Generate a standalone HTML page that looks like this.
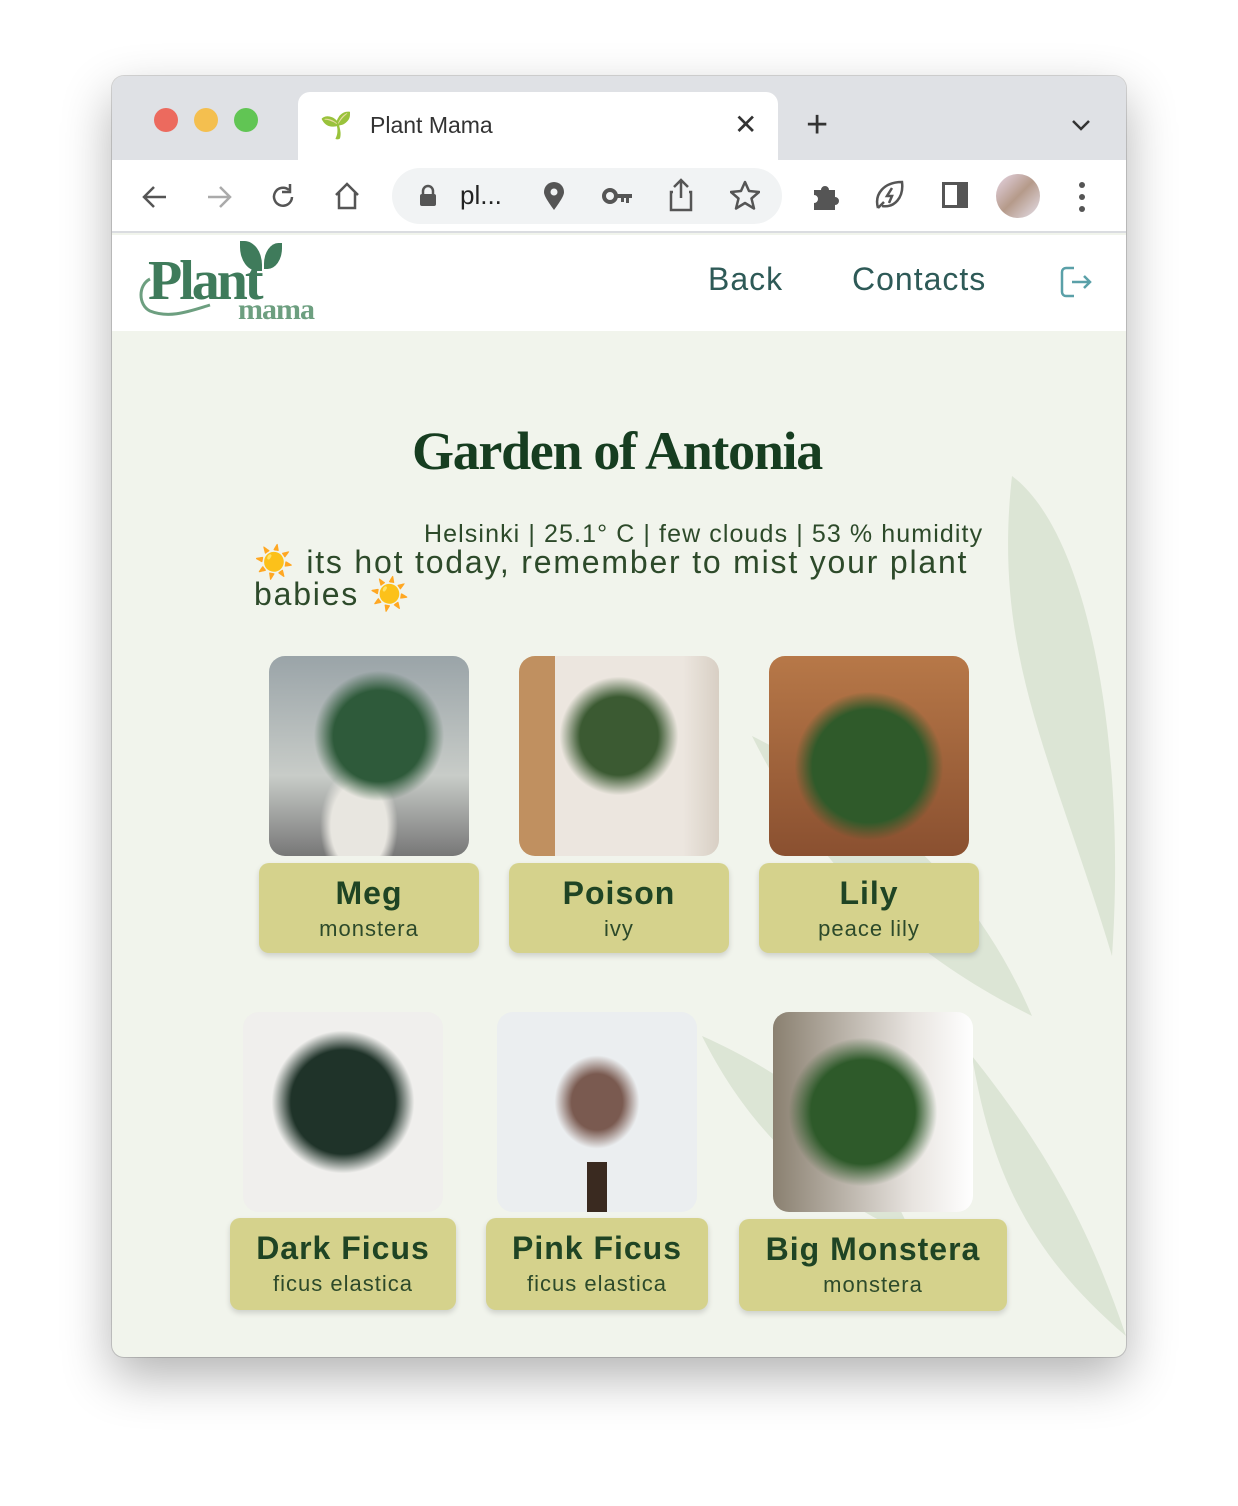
<!DOCTYPE html>
<html><head><style>
*{margin:0;padding:0;box-sizing:border-box}
body{width:1238px;height:1506px;background:#fff;font-family:"Liberation Sans",sans-serif;position:relative;overflow:hidden}
.win{position:absolute;left:112px;top:76px;width:1014px;height:1281px;border-radius:12px;overflow:hidden;box-shadow:0 20px 50px rgba(0,0,0,.3),0 0 0 1px rgba(0,0,0,.15);background:#f1f4ec}
.tabbar{position:absolute;left:0;top:0;width:100%;height:84px;background:#dfe1e5}
.dot{position:absolute;top:32px;width:24px;height:24px;border-radius:50%}
.tab{position:absolute;left:186px;top:16px;width:480px;height:70px;background:#fff;border-radius:12px 12px 0 0}
.toolbar{position:absolute;left:0;top:84px;width:100%;height:73px;background:#fff;border-bottom:2px solid #dadce0}
.url{position:absolute;left:280px;top:8px;width:390px;height:56px;background:#f1f3f4;border-radius:28px}
.hdr{position:absolute;left:0;top:159px;width:100%;height:96px;background:#fff}
.nav{position:absolute;top:26px;font-size:32px;color:#2e5a57;letter-spacing:1px}
.abs{position:absolute}
.img{position:absolute;width:200px;height:200px;border-radius:16px;overflow:hidden}
.lab{position:absolute;background:#d5d28c;border-radius:10px;box-shadow:0 3px 6px rgba(0,0,0,.15);text-align:center;color:#1f4424}
.lab b{display:block;font-size:32px;margin-top:12px;letter-spacing:1px}
.lab span{display:block;font-size:22px;margin-top:4px;color:#2d4a2a;letter-spacing:1px}
</style></head><body>
<div class="win">
 <div class="tabbar">
  <div class="dot" style="left:42px;background:#ec6a5e"></div>
  <div class="dot" style="left:82px;background:#f4bf4f"></div>
  <div class="dot" style="left:122px;background:#61c554"></div>
  <div class="tab">
   <div class="abs" style="left:22px;top:18px;font-size:26px">🌱</div>
   <div class="abs" style="left:72px;top:20px;font-size:23px;color:#333">Plant Mama</div>
   <div class="abs" style="left:436px;top:16px;font-size:28px;color:#333">✕</div>
  </div>
  <div class="abs" style="left:694px;top:30px;font-size:38px;color:#333;line-height:1">+</div>
  <svg class="abs" style="left:958px;top:42px" width="22" height="14"><path d="M3 3l8 8 8-8" stroke="#333" stroke-width="2.5" fill="none"/></svg>
 </div>
 <div class="toolbar">
  <svg class="abs" style="left:28px;top:22px" width="30" height="30"><path d="M26 15H5M14 5L4 15l10 10" stroke="#555" stroke-width="2.5" fill="none"/></svg>
  <svg class="abs" style="left:92px;top:22px" width="30" height="30"><path d="M4 15h21M16 5l10 10-10 10" stroke="#aaa" stroke-width="2.5" fill="none"/></svg>
  <svg class="abs" style="left:156px;top:22px" width="30" height="30"><path d="M24 15a9 9 0 1 1-3-7" stroke="#555" stroke-width="2.5" fill="none"/><path d="M22 2v8h-8" fill="none" stroke="#555" stroke-width="2.5"/></svg>
  <svg class="abs" style="left:220px;top:20px" width="30" height="32"><path d="M4 15L15 4l11 11M7 12v16h16V12" stroke="#555" stroke-width="2.5" fill="none"/></svg>
  <div class="url">
   <svg class="abs" style="left:26px;top:16px" width="20" height="24"><path d="M5 10V7a5 5 0 0 1 10 0v3" stroke="#555" stroke-width="2.5" fill="none"/><rect x="2" y="10" width="16" height="12" rx="2" fill="#555"/></svg>
   <div class="abs" style="left:68px;top:12px;font-size:26px;color:#222">pl...</div>
   <svg class="abs" style="left:150px;top:14px" width="24" height="30"><path d="M12 28C4 17 2 13 2 10a10 10 0 0 1 20 0c0 3-2 7-10 18z" fill="#555"/><circle cx="12" cy="10" r="3.5" fill="#f1f3f4"/></svg>
   <svg class="abs" style="left:210px;top:18px" width="32" height="20"><circle cx="8" cy="10" r="6" stroke="#555" stroke-width="4" fill="none"/><path d="M14 8h16v4h-3v5h-3v-5h-2v4h-3v-4h-5z" fill="#555"/></svg>
   <svg class="abs" style="left:276px;top:10px" width="26" height="34"><path d="M13 2v18M6 9l7-7 7 7M5 14H3v18h20V14h-2" stroke="#555" stroke-width="2.5" fill="none"/></svg>
   <svg class="abs" style="left:338px;top:12px" width="30" height="30"><path d="M15 2l4 9 10 1-7.5 6.5 2.5 10L15 23l-9 5.5 2.5-10L1 12l10-1z" stroke="#555" stroke-width="2.5" fill="none" stroke-linejoin="round"/></svg>
  </div>
  <svg class="abs" style="left:698px;top:20px" width="32" height="32"><path d="M4 10h7a4 4 0 1 1 8 0h6v7a4 4 0 1 1 0 8v5H4v-7a4 4 0 1 0 0-8z" fill="#555"/></svg>
  <svg class="abs" style="left:760px;top:18px" width="34" height="36"><path d="M6 30C2 16 12 4 30 4c2 16-8 26-20 24M6 30l6-6" stroke="#555" stroke-width="2.5" fill="none"/><path d="M20 10l-5 8h5l-3 7" stroke="#555" stroke-width="2.5" fill="none"/></svg>
  <div class="abs" style="left:830px;top:22px;width:26px;height:26px;border:3px solid #555;border-right-width:11px"></div>
  <div class="abs" style="left:884px;top:14px;width:44px;height:44px;border-radius:50%;background:linear-gradient(135deg,#e7d6e6,#b59a8a,#e6e0ea)"></div>
  <svg class="abs" style="left:962px;top:20px" width="16" height="34"><circle cx="8" cy="5" r="3" fill="#555"/><circle cx="8" cy="17" r="3" fill="#555"/><circle cx="8" cy="29" r="3" fill="#555"/></svg>
 </div>
 <div class="hdr">
  <div class="abs" style="left:36px;top:14px;font-family:'Liberation Serif',serif;font-weight:bold;font-size:56px;color:#3f7b5b;letter-spacing:-3px">Plant</div>
  <div class="abs" style="left:126px;top:58px;font-family:'Liberation Serif',serif;font-weight:bold;font-size:30px;color:#6d9f80;letter-spacing:-1px">mama</div>
  <svg class="abs" style="left:24px;top:40px" width="80" height="48"><path d="M14 4C2 10 2 30 14 36c20 8 40 0 60-6" stroke="#6d9f80" stroke-width="3" fill="none"/></svg>
  <div class="abs" style="left:128px;top:6px;width:22px;height:30px;background:#3f7b5b;border-radius:0 80% 0 80%"></div>
  <div class="abs" style="left:152px;top:8px;width:18px;height:26px;background:#3f7b5b;border-radius:80% 0 80% 0"></div>
  <div class="nav" style="left:596px">Back</div>
  <div class="nav" style="left:740px">Contacts</div>
  <svg class="abs" style="left:946px;top:30px" width="36" height="34"><path d="M16 3H8a4 4 0 0 0-4 4v20a4 4 0 0 0 4 4h8M14 17h18M26 11l6 6-6 6" stroke="#5aa0a8" stroke-width="2.5" fill="none"/></svg>
 </div>
 <svg class="abs" style="left:560px;top:380px" width="454" height="900"><path d="M340 20C420 80 454 300 440 500 380 300 320 200 340 20Z M80 280C200 340 300 420 360 560 240 500 150 420 80 280Z M300 600C380 700 420 780 454 880 360 800 320 720 300 600Z M30 580C120 620 200 680 240 780 150 740 80 680 30 580Z" fill="#c8d6bd" opacity=".5"/></svg>
 <div class="abs" style="left:300px;top:344px;font-family:'Liberation Serif',serif;font-weight:bold;font-size:54px;color:#163d20;letter-spacing:-1.3px">Garden of Antonia</div>
 <div class="abs" style="left:312px;top:444px;font-size:25px;color:#2d4a2a;letter-spacing:1.1px;white-space:nowrap">Helsinki | 25.1° C | few clouds | 53 % humidity</div>
 <div class="abs" style="left:142px;top:470px;width:740px;font-size:32px;line-height:32px;color:#2d4a2a;letter-spacing:1.8px">☀️ its hot today, remember to mist your plant babies ☀️</div>

 <div class="img" style="left:157px;top:580px;background:radial-gradient(circle at 55% 40%,#2e5a3a 0 28%,transparent 40%),radial-gradient(ellipse at 45% 85%,#e8e6e0 0 18%,transparent 25%),linear-gradient(#9aa4a8,#c8ccc8 60%,#777 100%)"></div>
 <div class="img" style="left:407px;top:580px;background:radial-gradient(circle at 50% 40%,#3b5a32 0 25%,transparent 38%),linear-gradient(90deg,#c09060 0 18%,#ece6df 18% 82%,#d8cfc4)"></div>
 <div class="img" style="left:657px;top:580px;background:radial-gradient(circle at 50% 55%,#2f5a2a 0 38%,transparent 50%),linear-gradient(#b77848,#8a5030)"></div>
 <div class="lab" style="left:147px;top:787px;width:220px;height:90px"><b>Meg</b><span>monstera</span></div>
 <div class="lab" style="left:397px;top:787px;width:220px;height:90px"><b>Poison</b><span>ivy</span></div>
 <div class="lab" style="left:647px;top:787px;width:220px;height:90px"><b>Lily</b><span>peace lily</span></div>

 <div class="img" style="left:131px;top:936px;background:radial-gradient(circle at 50% 45%,#1f3329 0 35%,transparent 48%),#f0efed"></div>
 <div class="img" style="left:385px;top:936px;background:radial-gradient(ellipse at 50% 45%,#7a5a50 0 18%,transparent 30%),linear-gradient(90deg,transparent 45%,#3a2a20 45% 55%,transparent 55%) 0 150px/100% 50px no-repeat,#ebeef0"></div>
 <div class="img" style="left:661px;top:936px;background:radial-gradient(circle at 45% 50%,#2e5a2a 0 35%,transparent 50%),linear-gradient(90deg,#8a8070,#e8e4e0 70%,#fff)"></div>
 <div class="lab" style="left:118px;top:1142px;width:226px;height:92px"><b>Dark Ficus</b><span>ficus elastica</span></div>
 <div class="lab" style="left:374px;top:1142px;width:222px;height:92px"><b>Pink Ficus</b><span>ficus elastica</span></div>
 <div class="lab" style="left:627px;top:1143px;width:268px;height:92px"><b>Big Monstera</b><span>monstera</span></div>
</div>
</body></html>
